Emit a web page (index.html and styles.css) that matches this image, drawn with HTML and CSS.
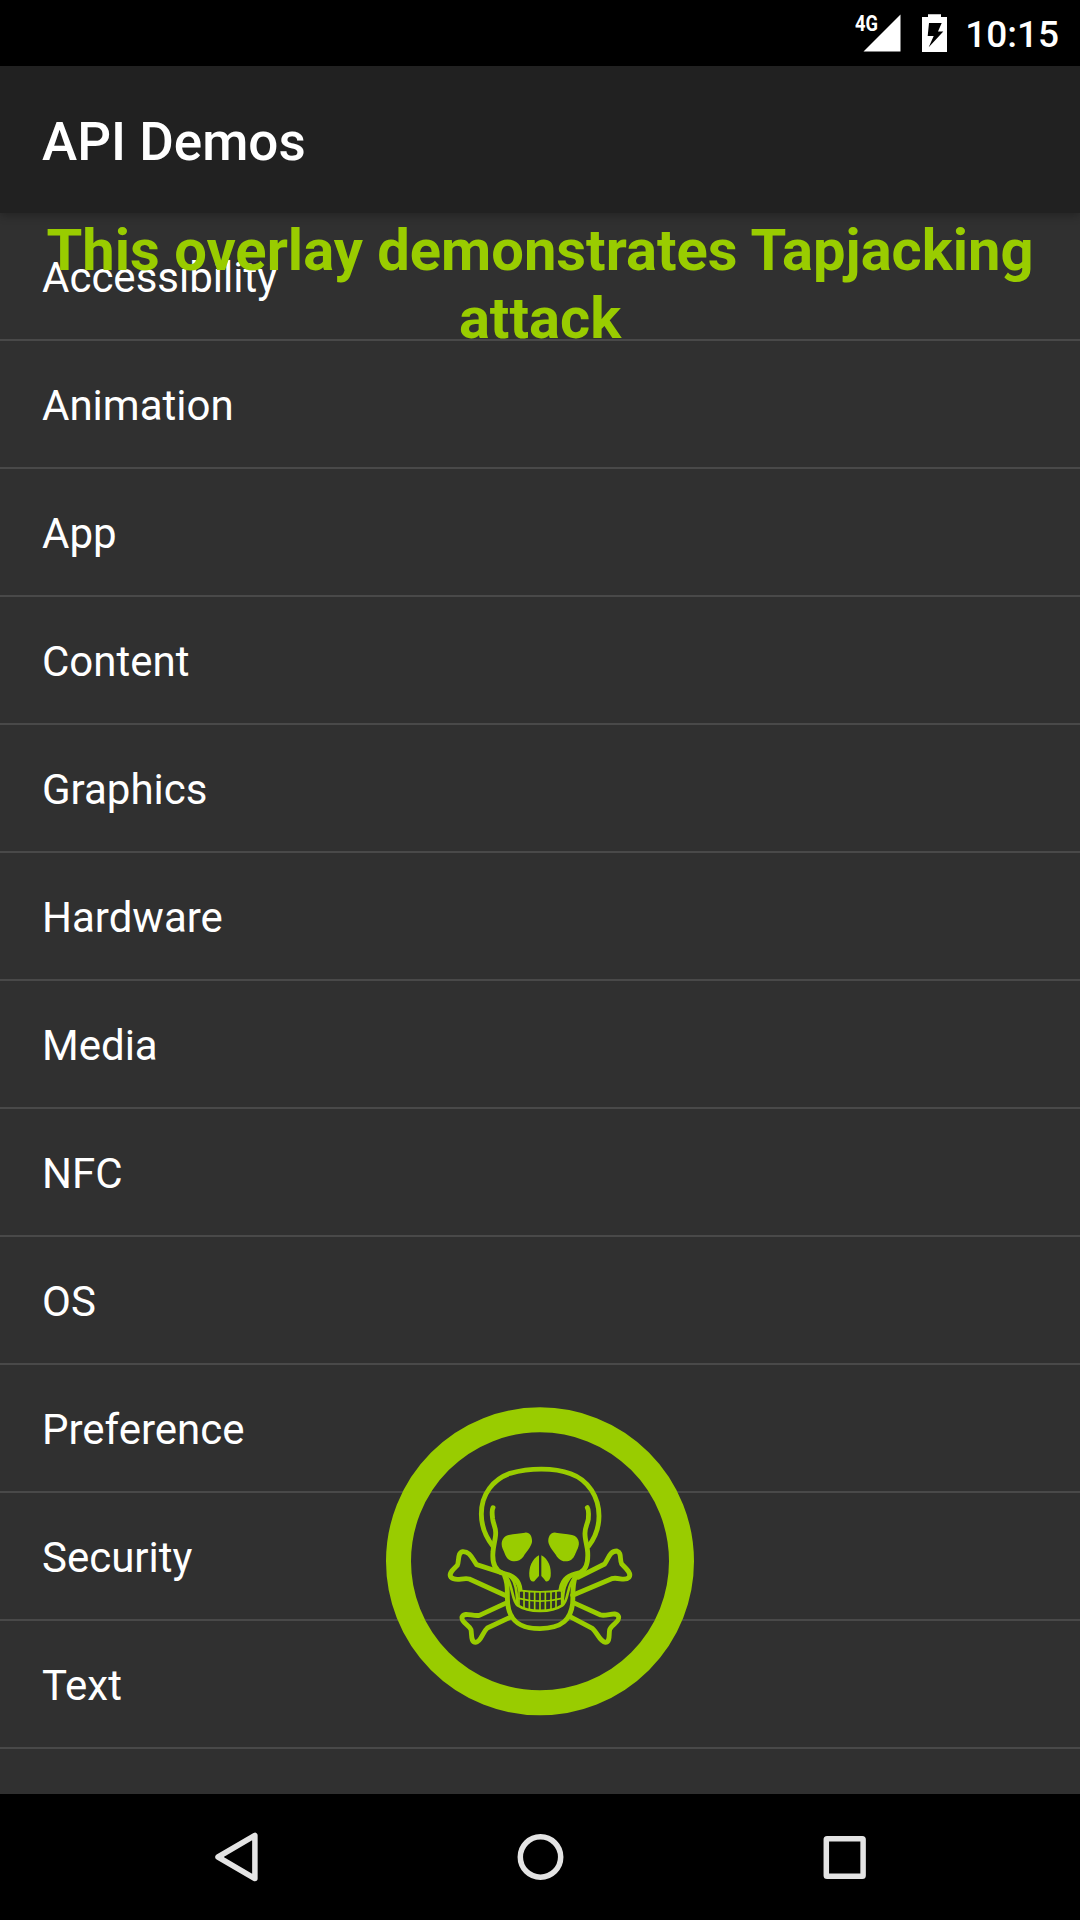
FILE: index.html
```html
<!DOCTYPE html>
<html lang="en">
<head>
<meta charset="utf-8">
<title>API Demos</title>
<link rel="stylesheet" href="styles.css">
</head>
<body>
<div class="screen">
  <header class="status-bar">
    <div class="signal">
      <span class="network">4G</span>
      <svg class="signal-icon" width="38" height="38" viewBox="0 0 38 38"><path d="M0.5 37.5H37.5V0.5Z" fill="#fff"/></svg>
    </div>
    <svg class="battery" width="25" height="38" viewBox="0 0 25 38">
      <path d="M0 3H6V0.3H19V3H25V38H0Z" fill="#fff"/>
      <path d="M7 9H19.7L16 17.6H21.3L6.7 33.3L11.7 22H5.7Z" fill="#000"/>
    </svg>
    <span class="clock">10:15</span>
  </header>
  <div class="app-bar"><h1 class="app-title">API Demos</h1></div>
  <main class="content">
    <ul class="list">
      <li class="row">Accessibility</li>
      <li class="row">Animation</li>
      <li class="row">App</li>
      <li class="row">Content</li>
      <li class="row">Graphics</li>
      <li class="row">Hardware</li>
      <li class="row">Media</li>
      <li class="row">NFC</li>
      <li class="row">OS</li>
      <li class="row">Preference</li>
      <li class="row">Security</li>
      <li class="row">Text</li>
    </ul>
    <p class="overlay-text">This overlay demonstrates Tapjacking attack</p>
    <svg class="skull" viewBox="0 0 1020 1020" fill="none" stroke="#99cc00" stroke-linecap="round" stroke-linejoin="round">
      <circle cx="510" cy="514" r="424.500" stroke-width="75"/>
      <g stroke-width="14.500">
        <path d="M370 470C346 440 334 412 334 372C334 312 370 268 420 250C478 234 550 232 602 251C656 270 687 322 687 378C687 416 676 442 656 468"/>
        <path d="M369 353C364 362 367 376 368 387C370 404 378 414 377 430C377 448 370 466 369 486C366 520 375 540 396 549C422 554 447 565 450 598"/>
        <path d="M652 353C658 362 655 376 655 387C652 404 644 414 645 432C645 450 652 468 653 486C655 518 648 540 630 548C596 556 578 566 573 598"/>
        <path d="M404 558C416 585 410 602 413 640C418 690 446 716 510 716C578 714 602 688 608 640C610 606 606 588 616 560"/>
        <path d="M398 549L320 524C306 506 301 484 278 485C262 488 268 512 262 526C250 538 234 550 243 562C257 576 278 562 298 567L410 618"/>
        <path d="M624 562L704 522C716 503 720 483 741 483C756 487 748 508 755 522C768 535 786 550 777 562C764 576 746 560 725 566L608 616"/>
        <path d="M411 638L328 676C308 680 283 664 276 681C273 697 297 704 303 719C306 736 302 757 317 757C334 755 336 728 352 714L425 680"/>
        <path d="M610 638L692 675C712 680 738 662 746 680C750 697 724 702 719 719C716 736 721 757 706 757C689 755 682 727 667 715L600 680"/>
      </g>
      <g stroke-width="8">
        <path d="M410 560C430 591 425 632 443 646C475 668 545 668 577 646C598 631 588 588 615 560"/>
        <path d="M420 558C437 578 440 600 442 640M601 560C587 580 579 594 578 640"/>
      </g>
      <g stroke-width="5">
        <path d="M448 601Q510 610 574 601M446 625Q510 642 576 625"/>
        <path d="M447 600V646M462 603V653M478 605V657M494 606V660M510 606V660M526 606V660M543 605V657M558 603V653M575 600V646"/>
      </g>
      <g fill="#99cc00" stroke="none">
        <path d="M416 435C433 431 451 430 465 428C480 426 487 440 486 456C483 472 469 485 460 500C449 514 432 518 417 509C406 501 405 490 398 476C391 461 396 440 416 435Z"/>
        <path d="M606 435C589 431 571 430 557 428C542 426 534 440 535 456C538 472 552 485 561 500C572 515 590 518 604 509C615 500 616 489 623 476C631 460 627 440 606 435Z"/>
        <path d="M507 496V558Q499 566 493 574Q481 578 478 559C476 532 486 507 507 496Z"/>
        <path d="M514 496V558Q522 566 527 574Q539 577 542 559C545 532 535 507 514 496Z"/>
      </g>
    </svg>
  </main>
  <nav class="nav-bar">
    <svg width="126" height="126" viewBox="0 0 126 126"><path d="M81.900 41.500V84.500L45 63Z"/></svg>
    <svg width="126" height="126" viewBox="0 0 126 126"><circle cx="63.500" cy="63" r="20.200"/></svg>
    <svg width="126" height="126" viewBox="0 0 126 126"><rect x="45.300" y="44.800" width="36.800" height="37.500" rx="0.800"/></svg>
  </nav>
</div>
</body>
</html>
```
FILE: styles.css
```css
* { box-sizing: border-box; }

body {
  margin: 0;
  background: #303030;
  color: #fff;
  font-family: Roboto, sans-serif;
}

.screen {
  width: 1080px;
  height: 1920px;
  display: flex;
  flex-direction: column;
  overflow: hidden;
}

.status-bar {
  flex: none;
  height: 66px;
  padding: 0 21px 0 0;
  display: flex;
  justify-content: flex-end;
  align-items: center;
  background: #000;
}

.signal {
  position: relative;
  height: 38px;
  margin-right: 21px;
}

.signal-icon, .battery { display: block; }

.network {
  position: absolute;
  left: -8.5px;
  top: -1px;
  font-size: 22px;
  line-height: 22px;
  font-weight: 700;
  transform: scaleX(0.83);
  transform-origin: left;
}

.battery { margin-right: 18px; }

.clock {
  padding-top: 3px;
  font-size: 37px;
  line-height: 44px;
  font-weight: 500;
}

.app-bar {
  position: relative;
  flex: none;
  height: 147px;
  padding: 0 42px;
  display: flex;
  align-items: center;
  background: #212121;
  box-shadow: 0 2px 9px rgba(0, 0, 0, 0.3);
  z-index: 1;
}

.app-title {
  margin: 0;
  padding-top: 4px;
  font-size: 53px;
  line-height: 62px;
  font-weight: 500;
}

.content {
  position: relative;
  flex: 1;
}

.list {
  margin: 0;
  padding: 0;
  list-style: none;
}

.row {
  height: 128px;
  padding: 3px 42px 0;
  border-bottom: 2px solid #494949;
  font-size: 42px;
  line-height: 124px;
}

.overlay-text {
  position: absolute;
  inset: 3px 0 auto;
  margin: 0;
  padding: 0 42px;
  color: #99cc00;
  font-size: 57.9px;
  line-height: 68px;
  font-weight: 700;
  text-align: center;
  z-index: 2;
}

.skull {
  position: absolute;
  left: 370px;
  top: 1177px;
  width: 340px;
  height: 340px;
}

.nav-bar {
  flex: none;
  height: 126px;
  padding: 0 173px;
  display: flex;
  justify-content: space-between;
  background: #000;
  fill: none;
  stroke: #e4e4e4;
  stroke-width: 5.5;
  stroke-linejoin: round;
}
```
